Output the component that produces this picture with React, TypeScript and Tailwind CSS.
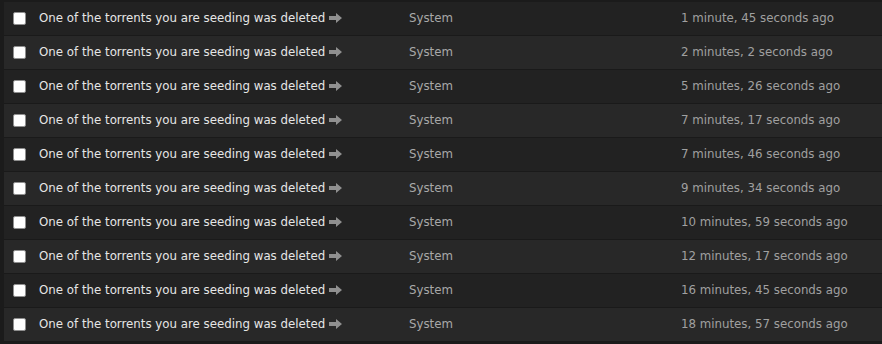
import * as React from 'react'

const rows = [
  '1 minute, 45 seconds ago',
  '2 minutes, 2 seconds ago',
  '5 minutes, 26 seconds ago',
  '7 minutes, 17 seconds ago',
  '7 minutes, 46 seconds ago',
  '9 minutes, 34 seconds ago',
  '10 minutes, 59 seconds ago',
  '12 minutes, 17 seconds ago',
  '16 minutes, 45 seconds ago',
  '18 minutes, 57 seconds ago',
]

const Arrow = () => (
  <svg className="ml-[4px] h-[10px] w-[13px] -translate-y-[1px]" viewBox="0 0 13 10" fill="#909090">
    <path d="M0 3h7V0l6 5-6 5V7H0z" />
  </svg>
)

export default function App() {
  return (
    <div className="h-[344px] w-[882px] overflow-hidden bg-[#1b1b1b] pl-[4px] pt-[2px] font-['DejaVu_Sans',sans-serif] text-[11.8px]">
      {rows.map((time, i) => (
        <div
          key={i}
          className={`grid h-[34px] grid-cols-[35px_370px_272px_1fr] items-center border-b border-[#1a1a1a] ${
            i % 2 === 0 ? 'bg-[#222222]' : 'bg-[#282828]'
          }`}
        >
          <div className="flex pl-[9px]">
            <span className="block h-[13px] w-[13px] rounded-[2px] border border-[#8f8f8f] bg-white" />
          </div>
          <div className="flex items-center text-[#e6e6e6]">
            <span>One of the torrents you are seeding was deleted</span>
            <Arrow />
          </div>
          <div className="text-[#a8a8a8]">System</div>
          <div className="text-[#a0a0a0]">{time}</div>
        </div>
      ))}
    </div>
  )
}
